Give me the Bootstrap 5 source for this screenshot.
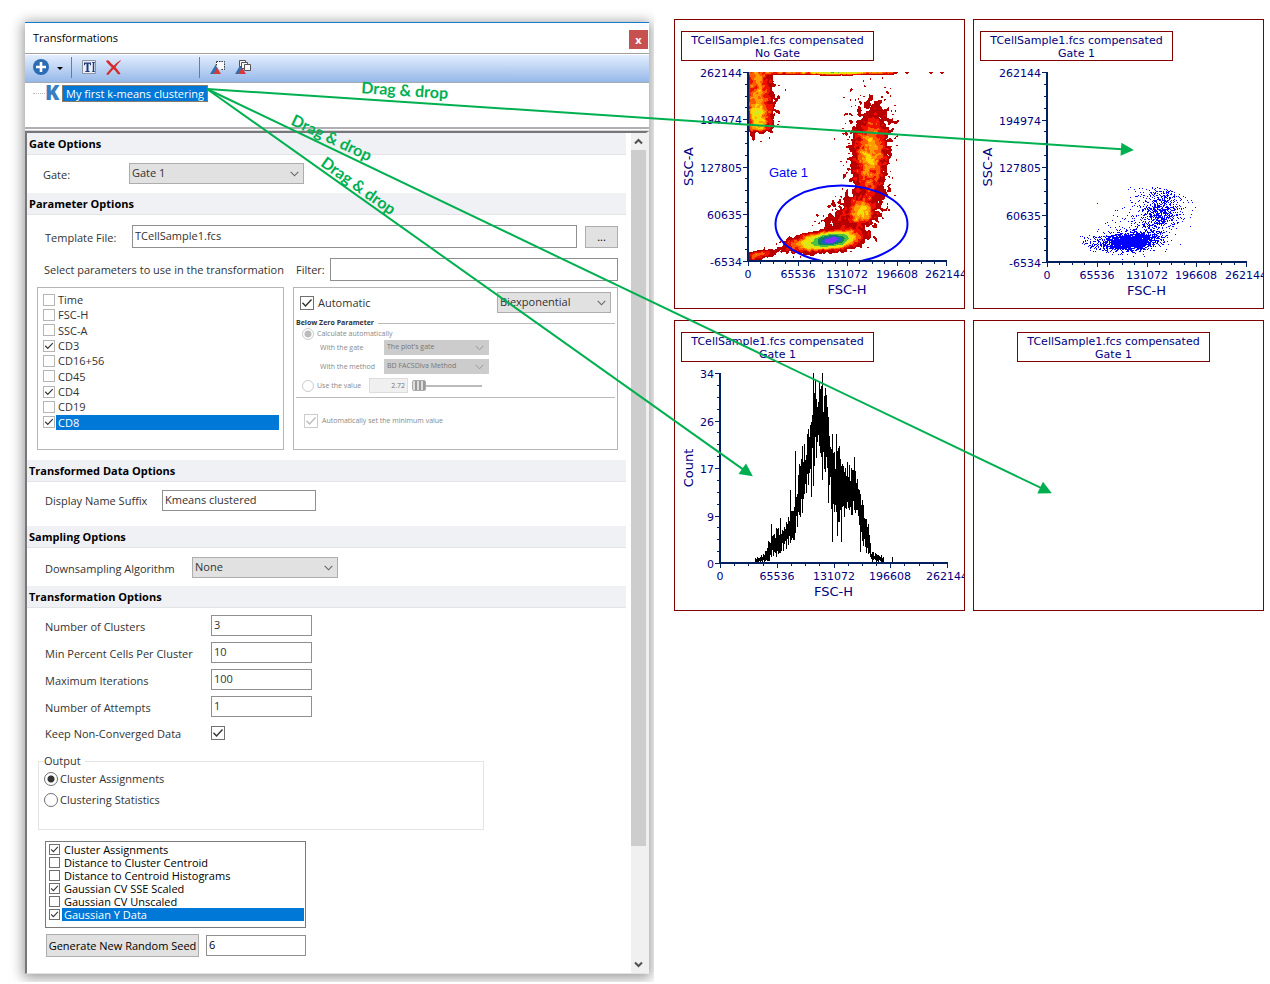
<!DOCTYPE html>
<html lang="en">
<head>
<meta charset="utf-8">
<meta name="viewport" content="width=device-width, initial-scale=1">
<title>Transformations</title>
<link href="https://cdn.jsdelivr.net/npm/bootstrap@5.3.0/dist/css/bootstrap.min.css" rel="stylesheet">
<style>
  :root { --green: #00b050; --pick: #0078d7; --navy: #000080; }
  body { font: 11px/16px "Open Sans", "Noto Sans", sans-serif; color: #333; background: #fff; }
  .workspace { display: grid; grid-template-columns: minmax(0, 654fr) minmax(0, 616fr); align-items: start; }
  .dock { padding: 22px 5px 8px 25px; overflow: hidden; }
  .tool-window { background: #fff; border-top: 1px solid #1979ca; box-shadow: 0 2px 12px 2px rgba(0, 0, 0, .4); }

  .title-bar { height: 31px; padding-left: 8px; border-bottom: 1px solid #a0a0a0; }
  .title-bar h1 { font-size: 11px; line-height: 16px; color: #000; }
  .close-btn { width: 19px; height: 19px; margin: 3px 1px 0 0; padding: 0; border: 0; background: #c75050; color: #fff; font: bold 11px/16px "Open Sans", sans-serif; }
  .tool-strip { height: 29px; padding: 0 0 3px 8px; border-top: 1px solid #fff; border-bottom: 1px solid #a5a9b2; background: linear-gradient(#e3edfe, #96b8e9); }
  .tool-strip button { padding: 0; border: 0; background: none; line-height: 0; }
  .tool-strip .tool { margin-left: 10px; }
  .tool-sep { width: 1px; height: 21px; background: #6f7c91; }
  .spread { width: 78px; }

  .tree-view { height: 44px; padding: 2px 0 0 8px; }
  .branch { width: 12px; border-top: 1px dotted #bbb; }
  .k-mark { width: 17px; font-size: 21px; font-weight: 800; line-height: 15px; color: #3b7dc0; }
  .tree-node { height: 17px; padding: 0 3px; border: 1px solid #8a7a66; background: var(--pick); color: #fff; line-height: 15px; text-decoration: none; }
  .splitter { height: 4px; border-top: 2px solid #b0aeb3; border-bottom: 1px solid #d5d5d5; }

  .pane { border: solid; border-width: 2px 3px 1px 2px; border-color: #77767b #f0f0f0 #e3e3e3 #77767b; }
  .pane h2 { height: 22px; margin: 0; padding-left: 2px; font-size: 11px; font-weight: 700; line-height: 22px; color: #000; background: #f0f1f5; border-bottom: 1px solid #e3e4e8; }
  .sheet { margin-right: 5px; }
  .scroll-rail { width: 15px; background: #f0f0f0; }
  .scroll-rail button { height: 17px; padding: 0; border: 0; background: none; line-height: 0; }
  .scroll-thumb { height: 696px; background: #cdcdcd; }

  .form-control, .form-select { height: 21px; min-height: 0; padding: 0 3px 2px 2px; border: 1px solid #8f8f8f; border-radius: 0; color: #333; font-size: 11px; line-height: 16px; }
  .form-select { padding: 0 20px 1px 2px; border-color: #adadad; background-color: #e1e1e1; background-size: 9px 6px; background-position: right 4px center;
    background-image: url("data:image/svg+xml,%3Csvg xmlns='http://www.w3.org/2000/svg' viewBox='0 0 9 6'%3E%3Cpath d='M.7.8l3.8 4 3.8-4' fill='none' stroke='%23666' stroke-width='1.1'/%3E%3C/svg%3E"); }
  .push { border: 1px solid #adadad; border-radius: 0; background: #e1e1e1; padding: 0; color: #000; font-size: 11px; line-height: 16px; }

  .tick { flex: none; appearance: none; width: 14px; height: 14px; margin: 0; border: 1px solid #707070; background: #fff center / 100% no-repeat; }
  .tick:checked { background-image: url("data:image/svg+xml,%3Csvg xmlns='http://www.w3.org/2000/svg' viewBox='0 0 12 12'%3E%3Cpath d='M1.5 5.7l3 3.2 6-6.4' fill='none' stroke='%23333' stroke-width='1.4'/%3E%3C/svg%3E"); }
  .tick:disabled { border-color: #ccc; }
  .tick:disabled:checked { background-image: url("data:image/svg+xml,%3Csvg xmlns='http://www.w3.org/2000/svg' viewBox='0 0 12 12'%3E%3Cpath d='M1.5 5.7l3 3.2 6-6.4' fill='none' stroke='%23bbb' stroke-width='1.4'/%3E%3C/svg%3E"); }
  .dot { flex: none; appearance: none; width: 14px; height: 14px; margin: 0 2px 0 0; border: 1px solid #707070; border-radius: 50%; background: #fff; }
  .dot:checked { background: radial-gradient(circle, #333 3px, #fff 4px); }
  .dot:disabled { width: 12px; height: 12px; border-color: #ccc; }
  .dot:disabled:checked { background: radial-gradient(circle, #bbb 3px, #fff 4px); }

  .field { display: grid; align-items: center; }
  .field > label, .field > span { padding-top: 2px; }
  .field-gate { grid-template-columns: 86px 175px; padding: 8px 0 9px 16px; }
  .field-file { grid-template-columns: 87px 1fr 33px; padding: 10px 8px 0 18px; }
  .field-file .form-control, .field-filter .form-control { height: 23px; }
  .field-file .push { height: 22px; }
  .field-filter { grid-template-columns: 252px 34px 1fr; padding: 10px 8px 0 17px; }
  .field-filter > label, .field-filter > span { padding-top: 0; }
  .field-suffix { grid-template-columns: 117px 154px; padding: 8px 0 15px 18px; }
  .field-suffix > label { padding-top: 0; }
  .field-sampling { grid-template-columns: 147px 146px; padding: 9px 0 8px 18px; }
  .field-options { grid-template-columns: 166px 101px; grid-template-rows: repeat(4, 21px) 20px; row-gap: 6px; padding: 7px 0 0 18px; }

  .param-boxes { display: grid; grid-template-columns: 247fr 325fr; gap: 9px; padding: 6px 8px 10px 10px; }
  .param-list, .scale-box { height: 163px; border: 1px solid #b5b5b5; }
  .param-list { padding: 4px 4px 0 5px; }
  .param-rows { height: 138px; grid-auto-rows: 1fr; }
  .param-rows .tick { width: 12px; height: 12px; border-color: #b5b5b5; }
  .param-rows .pick-row { margin-left: 1px; padding-left: 2px; line-height: 15px; }
  .picked { background: var(--pick); color: #fff; }

  .scale-box { padding: 4px 2px 0 2px; }
  .scale-mode { width: 114px; }
  .below-zero { font-size: 7px; line-height: 10px; color: #888; }
  .below-zero legend { float: none; width: auto; margin: 0 0 0 -6px; padding: 0 4px 0 0; font-size: 7px; font-weight: 700; line-height: 10px; color: #333; }
  .below-zero fieldset { padding: 0 0 4px 6px; border: solid #bbb; border-width: 1px 0; margin-top: 5px; }
  .below-zero .dot { margin-right: 3px; }
  .below-zero .form-select { width: 105px; height: 15px; border-color: #ccc; background-color: #ccc; font-size: 7px; line-height: 10px; color: #777;
    background-image: url("data:image/svg+xml,%3Csvg xmlns='http://www.w3.org/2000/svg' viewBox='0 0 9 6'%3E%3Cpath d='M.7.8l3.8 4 3.8-4' fill='none' stroke='%23999' stroke-width='1'/%3E%3C/svg%3E"); }
  .with-row { display: grid; grid-template-columns: 64px 105px; align-items: center; padding-left: 18px; }
  .value-box { width: 39px; }
  .below-zero .form-control { height: 15px; padding: 0 2px; border-color: #ddd; background: #f0f0f0; font-size: 7px; text-align: right; color: #777; }
  .slide { appearance: none; width: 70px; height: 13px; background: linear-gradient(#bbb, #bbb) center / 100% 2px no-repeat; }
  .slide::-webkit-slider-thumb { appearance: none; width: 14px; height: 11px; border: 1px solid #aaa; border-radius: 2px; background: repeating-linear-gradient(90deg, #ddd 0 2px, #999 2px 4px); }

  .output-set { width: 446px; height: 77px; margin: 10px 0 0 11px; padding: 0 0 0 5px; border: 1px solid #e4e4e4; }
  .output-set legend { float: none; width: auto; margin: 0 0 2px; padding: 0 4px 0 0; font-size: 11px; line-height: 16px; }
  .output-set label + label { margin-top: 5px; }
  .result-list { width: 261px; height: 87px; margin: 11px 0 6px 18px; padding: 1px 1px 0 3px; border: 1px solid #7a7a7a; line-height: 13px; color: #000; }
  .result-list .tick { width: 11px; height: 11px; }
  .result-list .pick-row { height: 13px; margin-left: 2px; padding-left: 2px; }
  .seed-row { padding: 0 0 16px 19px; }
  .seed-row .push { width: 153px; height: 23px; }
  .seed-row .form-control { width: 100px; margin-left: 7px; color: #000; }

  .plots { display: grid; grid-template-columns: 1fr 1fr; gap: 11px 8px; padding: 19px 6px 20px 20px; }
  .plot { border: 1px solid #800000; overflow: hidden; font-family: "DejaVu Sans", sans-serif; color: var(--navy); }
  .plot h3 { width: 193px; margin: 11px 0 0 6px; padding: 2px 0 0; height: 30px; border: 1px solid #800000; font-size: 11px; font-weight: 400; line-height: 13px; text-align: center; }
  .plot.bare h3 { margin-left: 43px; }
  .plot svg { display: block; width: 100%; }
  .plot text { font-size: 11px; fill: var(--navy); }
  .plot text.axis-name { font-size: 13px; }
  .plot text.gate-name { font: 13px "Liberation Sans", sans-serif; fill: #00f; }
  .links { position: absolute; inset: 0; width: 100%; height: 100%; pointer-events: none; }
  .links text { font: bold 16px Lato, sans-serif; fill: var(--green); }
</style>
</head>
<body>
<div class="position-relative" id="desk">
<main class="workspace">
  <div class="dock">
    <section class="tool-window" aria-label="Transformations">
      <header class="title-bar d-flex align-items-center justify-content-between">
        <h1 class="m-0 fw-normal">Transformations</h1>
        <button type="button" class="close-btn" aria-label="Close">x</button>
      </header>
      <div class="tool-strip d-flex align-items-center" role="toolbar" aria-label="Transformation tools">
        <button type="button" aria-label="Add"><svg width="16" height="16" viewBox="0 0 16 16"><circle cx="8" cy="8" r="8" fill="#2b6cb5"/><path d="M8 3v10M3 8h10" stroke="#fff" stroke-width="2.6"/></svg></button>
        <button type="button" class="ms-2" aria-label="Add menu"><svg width="6" height="16" viewBox="0 0 6 16"><path d="M0 8h6l-3 3z" fill="#000"/></svg></button>
        <span class="tool-sep ms-2"></span>
        <button type="button" class="tool" aria-label="Rename"><svg width="14" height="14" viewBox="0 0 14 14"><path d="M.5.5h13v13H.5z" fill="#e8eefa" stroke="#8d949e"/><path d="M2 2.500h7v2.700h-.8l-.6-1.500H6.500v7l1.200.5v.8H3.300v-.8l1.200-.5v-7H3.400L2.800 5.200H2zM10 2h3v.8h-.8v8.400h.8v.8h-3v-.8h.8V2.800H10z" fill="#233a78"/></svg></button>
        <button type="button" class="tool" aria-label="Delete"><svg width="15" height="15" viewBox="0 0 14 14"><path d="M0 1.200C1 0 2 0 3 1c1.500 2 3 3.200 4.300 4.300C9 3.500 11 1.500 13.600.2l.3.6C12 2.800 10.200 4.600 8.800 6.700c1.500 1.500 2.900 3.400 4.700 5.800-.6 1-1.600 1.300-2.500.6C9.700 11.500 8.500 9.800 7 8.500 5.300 10.200 4 12 2.300 13.800c-.8.3-1.500 0-2-.7C2 10.800 3.600 9 5.400 7 3.500 5 1.800 3.600 0 1.200z" fill="#d52b2b"/></svg></button>
        <span class="spread"></span><span class="tool-sep"></span>
        <button type="button" class="tool" aria-label="Gate plot"><svg width="15" height="15" viewBox="0 0 15 15"><path d="M0 14L6 4l3 10z" fill="#2f71b3"/><path d="M6 1.500h8v8H9.500L6 6z" fill="#f7f9fd"/><path d="M3.500 14L7 7.500l4 6.500z" fill="#d23b3b"/><path d="M6.500 1.500h8v8h-4M6.500 1.500v4" fill="none" stroke="#333" stroke-dasharray="1.500 1"/></svg></button>
        <button type="button" class="tool" aria-label="Gate plots"><svg width="16" height="15" viewBox="0 0 16 15"><path d="M0 14L6 4l3 10z" fill="#2f71b3"/><path d="M3 14l4-6.500 4 6.500z" fill="#d23b3b"/><g fill="#f7f9fd" stroke="#555"><path d="M4.500.5h6v6h-6z"/><path d="M6.500 2.500h6v6h-6z"/><path d="M9.500 4.500h6v6h-6z"/></g></svg></button>
      </div>
      <div class="tree-view d-flex align-items-start">
        <span class="branch mt-2"></span><span class="k-mark">K</span>
        <a href="#sheet" class="tree-node" id="source">My first k-means clustering</a>
      </div>
      <div class="splitter"></div>

      <div class="pane d-flex">
        <form class="sheet flex-grow-1" id="sheet">
          <h2>Gate Options</h2>
          <div class="field field-gate">
            <label for="gate">Gate:</label>
            <select class="form-select" id="gate"><option>Gate 1</option></select>
          </div>

          <h2>Parameter Options</h2>
          <div class="field field-file">
            <label for="file">Template File:</label>
            <div class="pe-2"><input class="form-control" id="file" value="TCellSample1.fcs"></div>
            <button type="button" class="push" aria-label="Browse">...</button>
          </div>
          <div class="field field-filter">
            <span>Select parameters to use in the transformation</span>
            <label for="filter">Filter:</label>
            <input class="form-control" id="filter">
          </div>
          <div class="param-boxes">
            <div class="param-list"><div class="param-rows d-grid" id="params"></div></div>
            <div class="scale-box">
              <div class="d-flex align-items-center justify-content-between px-1">
                <label class="d-flex align-items-center"><input type="checkbox" class="tick me-1" checked>Automatic</label>
                <select class="form-select scale-mode" aria-label="Scale"><option>Biexponential</option></select>
              </div>
              <div class="below-zero">
                <fieldset disabled>
                  <legend>Below Zero Parameter</legend>
                  <label class="d-flex align-items-center"><input type="radio" name="zero" class="dot" checked>Calculate automatically</label>
                  <div class="with-row"><label for="plotgate">With the gate</label><select class="form-select" id="plotgate"><option>The plot's gate</option></select></div>
                  <div class="with-row mt-1"><label for="method">With the method</label><select class="form-select" id="method"><option>BD FACSDiva Method</option></select></div>
                  <div class="d-flex align-items-center mt-1">
                    <label class="d-flex align-items-center"><input type="radio" name="zero" class="dot">Use the value</label>
                    <input class="form-control value-box ms-2" value="2.72" aria-label="Value">
                    <input type="range" class="slide ms-1" min="0" max="10" value="0" aria-label="Value slider">
                  </div>
                </fieldset>
                <label class="d-flex align-items-center mt-3 ms-2"><input type="checkbox" class="tick me-1" checked disabled>Automatically set the minimum value</label>
              </div>
            </div>
          </div>

          <h2>Transformed Data Options</h2>
          <div class="field field-suffix">
            <label for="suffix">Display Name Suffix</label>
            <input class="form-control" id="suffix" value="Kmeans clustered">
          </div>

          <h2>Sampling Options</h2>
          <div class="field field-sampling">
            <label for="sampling">Downsampling Algorithm</label>
            <select class="form-select" id="sampling"><option>None</option></select>
          </div>

          <h2>Transformation Options</h2>
          <div class="field field-options">
            <label for="clusters">Number of Clusters</label><input class="form-control" id="clusters" value="3">
            <label for="minpct">Min Percent Cells Per Cluster</label><input class="form-control" id="minpct" value="10">
            <label for="iters">Maximum Iterations</label><input class="form-control" id="iters" value="100">
            <label for="attempts">Number of Attempts</label><input class="form-control" id="attempts" value="1">
            <label for="keep">Keep Non-Converged Data</label><input type="checkbox" class="tick" id="keep" checked>
          </div>
          <fieldset class="output-set">
            <legend>Output</legend>
            <label class="d-flex align-items-center"><input type="radio" name="out" class="dot" checked>Cluster Assignments</label>
            <label class="d-flex align-items-center"><input type="radio" name="out" class="dot">Clustering Statistics</label>
          </fieldset>
          <div class="result-list" id="results"></div>
          <div class="seed-row d-flex align-items-center">
            <button type="button" class="push">Generate New Random Seed</button>
            <input class="form-control" value="6" aria-label="Random seed">
          </div>
        </form>
        <div class="scroll-rail d-flex flex-column">
          <button type="button" aria-label="Scroll up"><svg width="9" height="7" viewBox="0 0 9 7"><path d="M1 5.500L4.500 2 8 5.500" fill="none" stroke="#505050" stroke-width="2"/></svg></button>
          <div class="scroll-thumb"></div>
          <button type="button" class="mt-auto" aria-label="Scroll down"><svg width="9" height="7" viewBox="0 0 9 7"><path d="M1 1.500L4.500 5 8 1.500" fill="none" stroke="#505050" stroke-width="2"/></svg></button>
        </div>
      </div>
    </section>
  </div>

  <div class="plots">
    <article class="plot">
      <h3>TCellSample1.fcs compensated<br>No Gate</h3>
      <svg viewBox="675 61 289 247" id="density"></svg>
    </article>
    <article class="plot" id="target-dots">
      <h3>TCellSample1.fcs compensated<br>Gate 1</h3>
      <svg viewBox="974 61 289 247" id="dots"></svg>
    </article>
    <article class="plot" id="target-hist">
      <h3>TCellSample1.fcs compensated<br>Gate 1</h3>
      <svg viewBox="675 362 289 248" id="hist"></svg>
    </article>
    <article class="plot bare" id="target-bare">
      <h3>TCellSample1.fcs compensated<br>Gate 1</h3>
    </article>
  </div>
</main>
<svg class="links" id="links" aria-hidden="true"></svg>
</div>

<script src="https://cdn.jsdelivr.net/npm/bootstrap@5.3.0/dist/js/bootstrap.bundle.min.js"></script>
<script>
  // check lists; the last entry is the selected one
  function fillList(id, names, on) {
    document.getElementById(id).innerHTML = names.map((n, i) =>
      `<label class="d-flex align-items-center"><input type="checkbox" class="tick"${on.includes(i) ? ' checked' : ''}>` +
      `<span class="pick-row flex-grow-1${i === names.length - 1 ? ' picked' : ''}">${n}</span></label>`).join('');
  }
  fillList('params', ['Time', 'FSC-H', 'SSC-A', 'CD3', 'CD16+56', 'CD45', 'CD4', 'CD19', 'CD8'], [3, 6, 8]);
  fillList('results', ['Cluster Assignments', 'Distance to Cluster Centroid', 'Distance to Centroid Histograms',
    'Gaussian CV SSE Scaled', 'Gaussian CV Unscaled', 'Gaussian Y Data'], [0, 3, 5]);

  // repeatable random numbers
  let seed = 7;
  const rnd = () => (seed = (seed * 16807) % 2147483647) / 2147483647;
  const gauss = () => Math.sqrt(-2 * Math.log(rnd() + 1e-9)) * Math.cos(2 * Math.PI * rnd());

  // axes: x0/x1 and y0 (bottom)/y1 (top) in plot units
  function axes(o) {
    let d = '', t = '';
    for (let i = 0; i <= 16; i++) {
      const len = i % 4 ? 3 : 5;
      const y = Math.round(o.y0 + (o.y1 - o.y0) * i / 16), x = Math.round(o.x0 + (o.x1 - o.x0) * i / 16);
      d += `M${o.x0 - len} ${y}h${len}v1h${-len}zM${x} ${o.y0}h1v${len}h-1z`;
      if (i % 4 === 0) {
        t += `<text x="${o.x0 - 6}" y="${y + 5}" text-anchor="end">${o.ys[i / 4]}</text>`;
        t += `<text x="${x}" y="${o.y0 + 17}" text-anchor="middle">${o.xs[i / 4]}</text>`;
      }
    }
    const mx = (o.x0 + o.x1) / 2, my = (o.y0 + o.y1) / 2;
    return `<path d="${d}M${o.x0 - 1} ${o.y1}h2V${o.y0 + 1}h-2zM${o.x0 - 1} ${o.y0 - 1}H${o.x1 + 1}v2H${o.x0 - 1}z" fill="#002060" shape-rendering="crispEdges"/>${t}` +
      `<text class="axis-name" x="${mx}" y="${o.y0 + 33}" text-anchor="middle">FSC-H</text>` +
      `<text class="axis-name" transform="translate(${o.nameX} ${my}) rotate(-90)" text-anchor="middle">${o.name}</text>`;
  }
  const XS = ['0', '65536', '131072', '196608', '262144'];
  const YS = ['-6534', '60635', '127805', '194974', '262144'];

  // density plot: scattered events, smoothed and cut into colour bands
  (function () {
    const X = 749, Y = 72, W = 196, H = 189, g = new Float32Array(W * H);
    const add = (x, y, w) => {
      x -= X; y -= Y;
      if (x < 0 || y < 0 || x >= W || y >= H) return;
      for (let j = -4; j <= 4; j++) for (let i = -4; i <= 4; i++) {
        const px = Math.floor(x) + i, py = Math.floor(y) + j;
        if (px < 0 || py < 0 || px >= W || py >= H) continue;
        const r = (px + .5 - x) ** 2 + (py + .5 - y) ** 2;
        g[py * W + px] += w * Math.exp(-r / 2.6);
      }
    };
    const blob = (n, cx, cy, sx, sy, tilt) => {
      for (let k = 0; k < n; k++) { const u = gauss() * sx; add(cx + u, cy + gauss() * sy + u * tilt, 1); }
    };
    for (let k = 0; k < 1350; k++) add(758 + gauss() * 7, 74 + rnd() * 56, 1);
    blob(420, 758, 115, 6, 9, 0);
    for (let k = 0; k < 1500; k++) { const v = gauss() * 25; add(870 - v * .08 + gauss() * 9, 154 + v, 1); }
    blob(650, 871, 156, 7, 17, 0);
    blob(90, 866, 140, 12, 34, 0);
    blob(420, 861, 212, 9, 9, -.2);
    blob(260, 862, 213, 5, 5, -.2);
    blob(260, 846, 216, 15, 9, -.5);
    blob(3000, 826, 241, 16, 4, -.12);
    blob(3000, 832, 240, 8, 3, -.1);
    blob(130, 759, 255, 8, 2, -.25);
    for (let k = 0; k < 420; k++) add(748 + rnd() * 145, 72.5, 1);
    for (let k = 0; k < 420; k++) add(837 + gauss() * 16, 72.5, 1);
    [896, 907, 931, 942].forEach(x => add(x, 72.5, 2));
    const bands = [[.8, '#b80000'], [3.4, '#f01000'], [6.5, '#ff5a00'], [10.500, '#ff9c00'], [15, '#ffd800'], [22, '#d8e818'], [42, '#50c040'], [75, '#108060'], [115, '#2060c0'], [155, '#8030ff']];
    let out = '';
    bands.forEach(([lo, c], b) => {
      const hi = b + 1 < bands.length ? bands[b + 1][0] : 1e9;
      let d = '';
      for (let y = 0; y < H; y++) for (let x = 0; x < W; x++) {
        let e = x;
        while (e < W && g[y * W + e] >= lo && g[y * W + e] < hi) e++;
        if (e > x) { d += `M${X + x} ${Y + y}h${e - x}v1h${x - e}z`; x = e - 1; }
      }
      out += `<path d="${d}" fill="${c}"/>`;
    });
    document.getElementById('density').innerHTML = `<g shape-rendering="crispEdges">${out}</g>` +
      `<clipPath id="inside"><path d="M748 61h216v201H748z"/></clipPath>` +
      `<ellipse cx="841.500" cy="224" rx="66" ry="38.500" fill="none" stroke="#00f" stroke-width="2" clip-path="url(#inside)"/>` +
      `<text class="gate-name" x="769" y="177">Gate 1</text>` +
      axes({ x0: 748, x1: 946, y0: 261, y1: 72, xs: XS, ys: YS, nameX: 693, name: 'SSC-A' });
  })();

  // dot plot of the gated events
  (function () {
    let d = '';
    const cloud = (n, cx, cy, sx, sy, tilt) => {
      for (let k = 0; k < n; k++) {
        const u = gauss() * sx, x = cx + u, y = cy + gauss() * sy + u * tilt;
        if (((x - 1140.5) / 66) ** 2 + ((y - 225) / 39) ** 2 < 1) d += `M${Math.round(x)} ${Math.round(y)}h1v1h-1z`;
      }
    };
    cloud(2000, 1132, 241, 12, 4, -.08);
    cloud(420, 1112, 241, 15, 5, -.1);
    cloud(430, 1161, 213, 9, 8, -.2);
    cloud(420, 1150, 218, 18, 14, -.4);
    cloud(200, 1163, 193, 13, 9, 0);
    document.getElementById('dots').innerHTML = `<path d="${d}" fill="#00f" shape-rendering="crispEdges"/>` +
      axes({ x0: 1047, x1: 1246, y0: 262, y1: 72, xs: XS, ys: YS, nameX: 992, name: 'SSC-A' });
  })();

  // histogram trace: [x, lowest, highest]
  (function () {
    const key = [[755, 563, 558], [764, 563, 554], [770, 561, 538], [776, 558, 532], [782, 552, 528], [788, 548, 516], [794, 540, 500], [799, 520, 470],
      [804, 508, 450], [808, 486, 438], [811, 476, 402], [814, 470, 388], [818, 458, 388], [822, 466, 394], [826, 474, 398], [828, 480, 410],
      [831, 510, 444], [834, 524, 458], [838, 532, 456], [843, 520, 470], [848, 514, 470], [853, 516, 470], [857, 526, 484], [862, 548, 506],
      [868, 556, 530], [871, 562, 552], [877, 563, 555], [884, 563, 557]];
    const peaks = { 771: 524, 780: 518, 790: 490, 795: 451, 802: 446, 808: 429, 813: 373, 815: 379, 822: 373, 826: 395, 832: 434, 836: 434, 839: 446, 847: 462, 854: 457, 859: 490, 868: 524, 892: 557 };
    const lows = { 811: 497, 813: 486, 822: 480, 828: 503, 832: 542, 837: 536, 841: 542, 860: 552 };
    let d = '';
    for (let x = 755; x <= 892; x++) {
      const i = key.findIndex(k => k[0] > x);
      let lo = 563, hi = 563;
      if (i > 0) {
        const a = key[i - 1], b = key[i], t = (x - a[0]) / (b[0] - a[0]);
        lo = a[1] + (b[1] - a[1]) * t; hi = a[2] + (b[2] - a[2]) * t;
        const s = (lo - hi) * .45;
        lo = Math.min(563, lo - rnd() * s * .9); hi += (rnd() - .35) * s;
      }
      if (peaks[x]) hi = peaks[x];
      if (lows[x]) lo = lows[x];
      if (lo > hi) d += `M${x} ${Math.round(hi)}h1V${Math.round(lo)}h-1z`;
    }
    document.getElementById('hist').innerHTML = `<path d="${d}" fill="#000" shape-rendering="crispEdges"/>` +
      axes({ x0: 720, x1: 947, y0: 563, y1: 373, xs: XS, ys: ['0', '9', '17', '26', '34'], nameX: 693, name: 'Count' });
  })();

  // arrows from the tree node into the plots; fx, fy are fractions of the plot
  function drawLinks() {
    const desk = document.getElementById('desk').getBoundingClientRect();
    const s = document.getElementById('source').getBoundingClientRect();
    const x0 = s.right - desk.left - 1, y0 = s.top - desk.top + 4;
    document.getElementById('links').innerHTML = [
      ['target-dots', .553, .452, 154, -6], ['target-bare', .271, .595, 90, -4], ['target-hist', .271, .537, 136, -3]
    ].map(([id, fx, fy, along, off]) => {
      const r = document.getElementById(id).getBoundingClientRect();
      const x1 = r.left - desk.left + r.width * fx, y1 = r.top - desk.top + r.height * fy;
      const len = Math.hypot(x1 - x0, y1 - y0), a = Math.atan2(y1 - y0, x1 - x0) * 180 / Math.PI;
      return `<g transform="translate(${x0} ${y0}) rotate(${a})"><path d="M0 0H${len - 12}" stroke="#00b050" stroke-width="2"/>` +
        `<path d="M${len} 0l-13-6.500v13z" fill="#00b050"/><text x="${along}" y="${off}">Drag &amp; drop</text></g>`;
    }).join('');
  }
  drawLinks();
  addEventListener('resize', drawLinks);
  document.fonts.ready.then(drawLinks);
</script>
</body>
</html>
